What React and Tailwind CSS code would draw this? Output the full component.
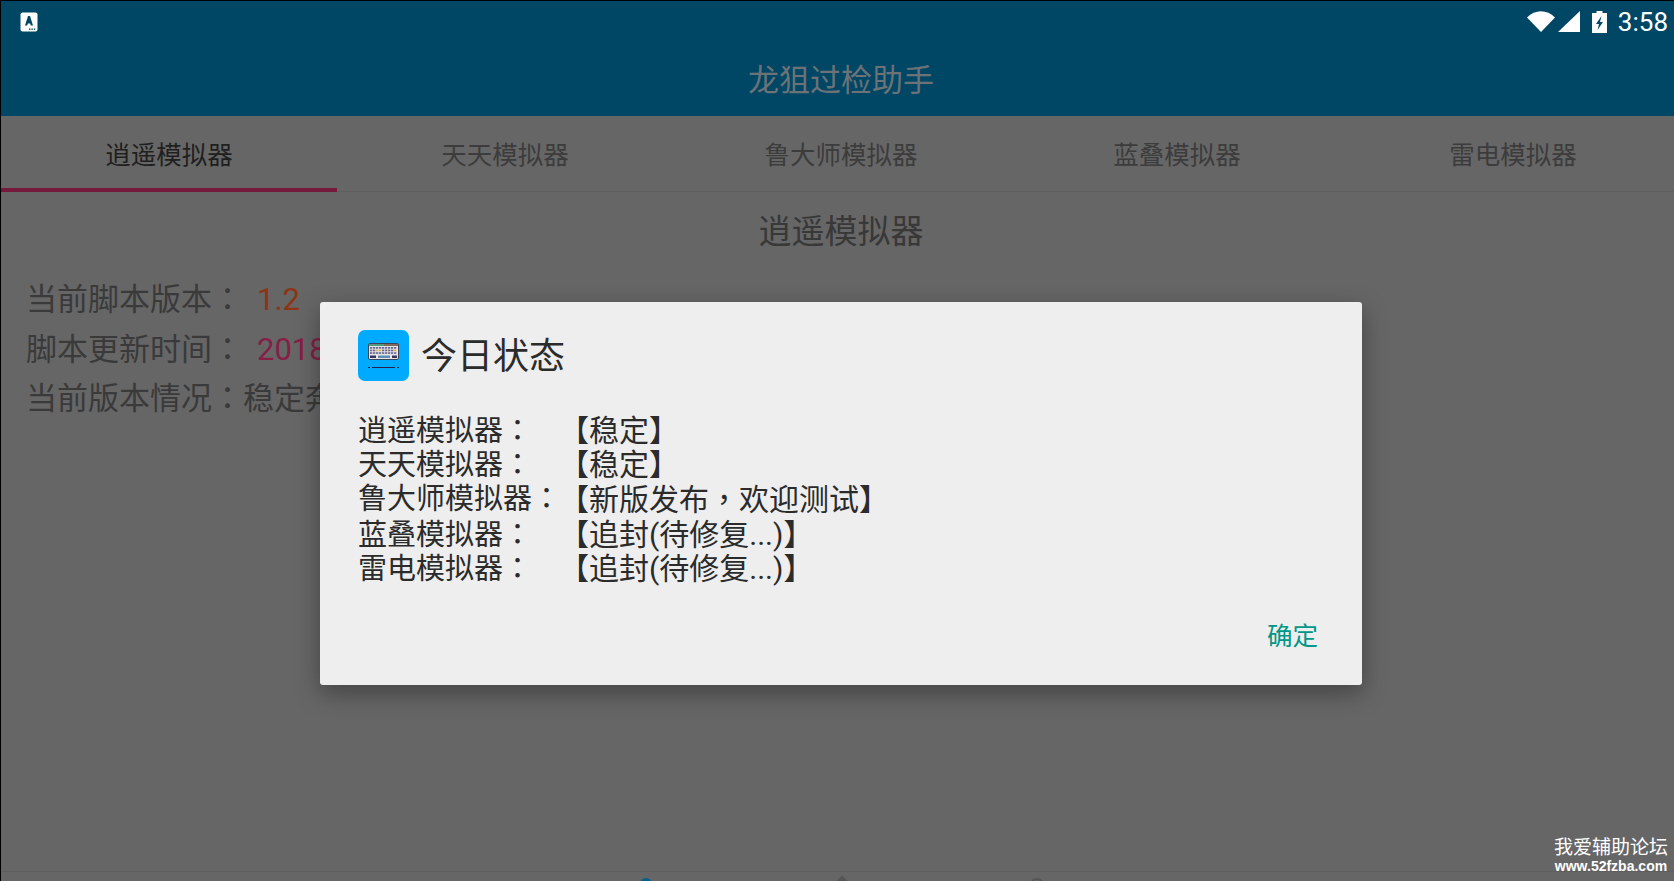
const cjk = 'font-["Roboto","Noto_Sans_CJK_SC",sans-serif]';

const tabs = ['逍遥模拟器', '天天模拟器', '鲁大师模拟器', '蓝叠模拟器', '雷电模拟器'];

const statusRows = [
  ['逍遥模拟器', '【稳定】'],
  ['天天模拟器', '【稳定】'],
  ['鲁大师模拟器', '【新版发布，欢迎测试】'],
  ['蓝叠模拟器', '【追封(待修复...)】'],
  ['雷电模拟器', '【追封(待修复...)】'],
];

// centred full-width punctuation, as the Traditional Chinese face draws it
const Punct = ({ children }) => (
  <span className='font-["Noto_Sans_CJK_TC",sans-serif] leading-none'>{children}</span>
);

const NotificationIcon = () => (
  <svg width="18" height="20" viewBox="0 0 18 20">
    <rect x="0.5" y="0.5" width="17" height="19" rx="2" fill="#ffffff" />
    <path d="M5 13.5 L8 4 H10 L13 13.5 H10.8 L10.2 11.5 H7.8 L7.2 13.5 Z" fill="#004765" />
    <rect x="9" y="16.5" width="1.4" height="1.4" fill="#004765" />
    <rect x="11.4" y="16.5" width="1.4" height="1.4" fill="#004765" />
    <rect x="13.8" y="16.5" width="1.4" height="1.4" fill="#004765" />
  </svg>
);

const WifiIcon = () => (
  <svg width="28" height="21" viewBox="0 0 28 21">
    <path d="M0 6.5 C8 -2 20 -2 28 6.5 L14 21 Z" fill="#ffffff" />
  </svg>
);

const SignalIcon = () => (
  <svg width="22" height="21" viewBox="0 0 22 21">
    <path d="M22 0 V21 H0 Z" fill="#ffffff" />
  </svg>
);

const BatteryIcon = () => (
  <svg width="15" height="22" viewBox="0 0 15 22">
    <path
      fillRule="evenodd"
      d="M4.5 0 H10.5 V2 H15 V22 H0 V2 H4.5 Z M9.5 5 L4 13 H7 L5.5 19 L11 11 H8 Z"
      fill="#ffffff"
    />
  </svg>
);

const KeyboardIcon = () => {
  const keys = [];
  for (let row = 0; row < 3; row++) {
    for (let col = 0; col < 9; col++) {
      const yellow = (row === 1 && (col === 2 || col === 3)) || (row === 1 && col === 8);
      keys.push(
        <rect
          key={`${row}-${col}`}
          x={12 + col * 3}
          y={17 + row * 2.6}
          width="2.3"
          height="1.7"
          fill={yellow ? '#d9b24a' : '#6d6c8e'}
        />
      );
    }
  }
  return (
    <svg width="51" height="51" viewBox="0 0 51 51">
      <rect x="10.5" y="13.5" width="30" height="16" rx="1.5" fill="#e4e4ec" stroke="#3d4356" strokeWidth="1" />
      <rect x="11" y="14" width="15" height="2" fill="#4f9a80" />
      <rect x="26" y="14" width="14" height="2" fill="#7f6a5c" />
      {keys}
      <rect x="12" y="25.5" width="6" height="2.5" fill="#34365c" />
      <rect x="20" y="25.5" width="12" height="2.5" fill="#5f8fb0" />
      <rect x="34" y="25.5" width="5" height="2.5" fill="#34365c" />
      <path d="M10 37.5 H12 M14 37.5 H37 M39 37.5 H41" stroke="#2a1d4a" strokeWidth="1" />
    </svg>
  );
};

const App = () => {
  return (
    <div className={`relative h-[881px] w-[1674px] overflow-hidden bg-black pl-px pt-px ${cjk}`}>
      <div className="flex h-[880px] w-[1680px] flex-col bg-[#666666]">
        <header className="flex h-[115px] flex-col bg-[#004765] text-white">
          <div className="flex h-[40px] w-[1673px] items-center pl-[19px] pr-[6px] pt-[1px]">
            <NotificationIcon />
            <div className="ml-auto flex items-center">
              <WifiIcon />
              <span className="ml-[3px]"><SignalIcon /></span>
              <span className="ml-[12px]"><BatteryIcon /></span>
              <span className="ml-[11px] text-[26px] leading-none">3:58</span>
            </div>
          </div>
          <h1 className="flex flex-1 items-center justify-center pt-[4px] text-[31px] leading-none font-normal text-[#6c7276]">
            龙狙过检助手
          </h1>
        </header>

        <nav className="flex h-[76px] border-b border-[#5e5e5e]">
          {tabs.map((tab, i) => (
            <div
              key={tab}
              className={
                i === 0
                  ? 'flex w-[336px] items-center justify-center border-b-[4px] border-[#751a3d] pt-[6px] text-[25.5px] text-[#1f1f1f] -mb-px'
                  : 'flex w-[336px] items-center justify-center pt-[3px] text-[25.5px] text-[#3c3c3c]'
              }
            >
              {tab}
            </div>
          ))}
        </nav>

        <main className="flex-1">
          <h2 className="mt-[20px] text-center text-[33px] leading-[40px] font-normal text-[#383838]">逍遥模拟器</h2>
          <div className="mt-[23px] pl-[25px] text-[31px] leading-[49.5px] text-[#3a3a3a]">
            <div>
              当前脚本版本<Punct>：</Punct>
              <span className="ml-[14px] text-[#8c3413]">1.2</span>
            </div>
            <div>
              脚本更新时间<Punct>：</Punct>
              <span className="ml-[14px] text-[#851f45]">2018-04-20</span>
            </div>
            <div>
              当前版本情况<Punct>：</Punct>稳定奔跑
            </div>
          </div>
        </main>

        <footer className="relative h-[10px] border-t border-[#5e5e5e]">
          <span className="absolute left-[639px] top-[6px] h-[12px] w-[12px] rounded-full bg-[#005f8a]" />
          <span className="absolute left-[835px] top-[6px] h-[12px] w-[12px] rotate-45 bg-[#555555]" />
          <span className="absolute left-[1029px] top-[6px] h-[14px] w-[14px] rounded-full border-2 border-[#555555]" />
        </footer>
      </div>

      <div className="absolute left-[320px] top-[302px] flex h-[383px] w-[1042px] flex-col rounded-[3px] bg-[#eeeeee] pl-[38px] pr-[44px] shadow-[0_8px_24px_rgba(0,0,0,0.35)]">
        <div className="mt-[28px] flex items-start">
          <div className="h-[51px] w-[51px] rounded-[7px] bg-[#00aaff]">
            <KeyboardIcon />
          </div>
          <span className="ml-[12px] pt-[2px] text-[36px] leading-[50px] text-[#2b2b2b]">今日状态</span>
        </div>
        <div className="mt-[32px] grid grid-cols-[201px_1fr] text-[29px] leading-[34.2px] text-[#2b2b2b]">
          {statusRows.map(([name, state]) => (
            <div key={name} className="contents">
              <div className="whitespace-nowrap">{name}<Punct>：</Punct></div>
              <div className="whitespace-nowrap text-[30px]">
                {state.split('，').map((part, i) => (
                  <span key={part}>{i > 0 && <Punct>，</Punct>}{part}</span>
                ))}
              </div>
            </div>
          ))}
        </div>
        <div className="mt-auto mb-[32px] self-end text-[25.5px] leading-[34px] text-[#009688]">确定</div>
      </div>

      <div className="absolute right-[6px] bottom-[6px] flex flex-col items-center text-white">
        <span className="text-[19px] leading-[18px]">我爱辅助论坛</span>
        <span className='font-["Liberation_Sans",sans-serif] text-[14px] leading-[18px] font-bold'>www.52fzba.com</span>
      </div>
    </div>
  );
};

export default App;
